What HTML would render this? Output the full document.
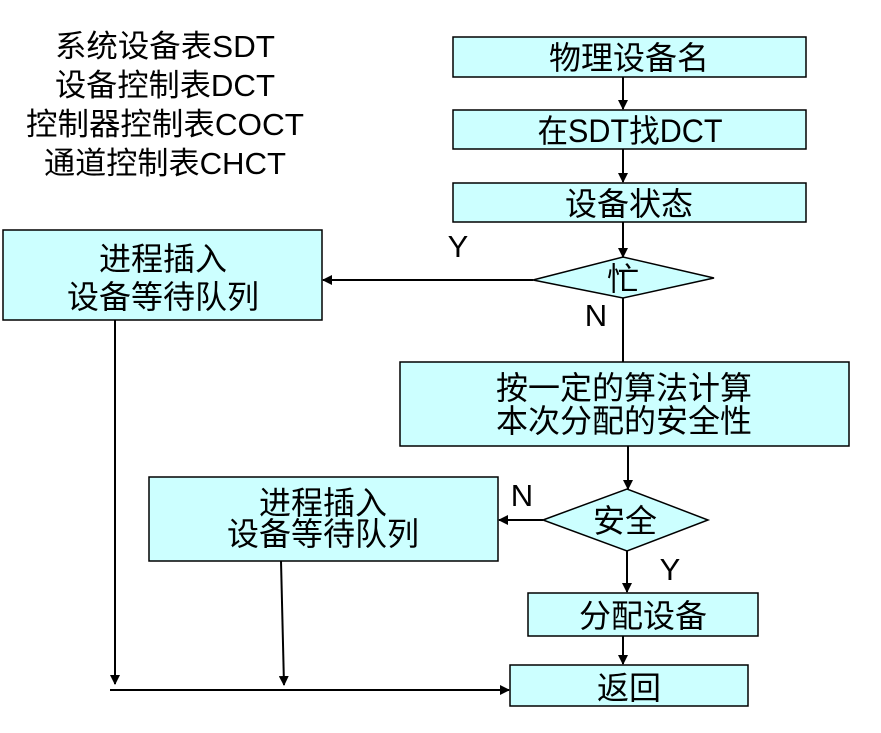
<!DOCTYPE html>
<html><head><meta charset="utf-8"><style>
html,body{margin:0;padding:0;background:#fff;}
svg{display:block;}
text{font-family:"Liberation Sans","Noto Sans CJK SC",sans-serif;fill:#000;}
</style></head><body>
<svg width="881" height="733" viewBox="0 0 881 733" xmlns="http://www.w3.org/2000/svg">
<defs><marker id="a" markerWidth="10" markerHeight="10" refX="9" refY="5" orient="auto" markerUnits="userSpaceOnUse"><path d="M0,0 L10,5 L0,10 z" fill="#000"/></marker></defs>
<g font-size="31" text-anchor="middle">
<text x="165" y="57" textLength="220" lengthAdjust="spacingAndGlyphs">系统设备表SDT</text>
<text x="165" y="96" textLength="220" lengthAdjust="spacingAndGlyphs">设备控制表DCT</text>
<text x="165" y="135" textLength="278" lengthAdjust="spacingAndGlyphs">控制器控制表COCT</text>
<text x="165" y="174" textLength="242" lengthAdjust="spacingAndGlyphs">通道控制表CHCT</text>
</g>
<g fill="#ccffff" stroke="#000" stroke-width="1.5">
<rect x="453" y="37" width="353" height="40"/>
<rect x="453" y="110" width="353" height="39"/>
<rect x="453" y="183" width="353" height="39"/>
<polygon points="533,280 623,257 714,278 623,298"/>
<rect x="3" y="230" width="319" height="90"/>
<rect x="400" y="362" width="449" height="84"/>
<polygon points="543,520 627,489 708,520 627,551"/>
<rect x="149" y="477" width="349" height="84"/>
<rect x="528" y="593" width="230" height="43"/>
<rect x="510" y="665" width="238" height="41"/>
</g>
<g stroke="#000" stroke-width="2" fill="none">
<line x1="623" y1="77" x2="623" y2="109" marker-end="url(#a)"/>
<line x1="623" y1="149" x2="623" y2="182" marker-end="url(#a)"/>
<line x1="623" y1="222" x2="623" y2="257" marker-end="url(#a)"/>
<line x1="533" y1="280" x2="323" y2="280" marker-end="url(#a)"/>
<line x1="623" y1="298" x2="623" y2="362"/>
<line x1="628" y1="446" x2="628" y2="489" marker-end="url(#a)"/>
<line x1="543" y1="520" x2="499" y2="520" marker-end="url(#a)"/>
<line x1="627" y1="551" x2="627" y2="592" marker-end="url(#a)"/>
<line x1="623" y1="636" x2="623" y2="664" marker-end="url(#a)"/>
<line x1="115" y1="320" x2="115" y2="684" marker-end="url(#a)"/>
<line x1="281" y1="561" x2="284" y2="685" marker-end="url(#a)"/>
<line x1="110" y1="690" x2="509" y2="690" marker-end="url(#a)"/>
</g>
<g font-size="32" text-anchor="middle">
<text x="629" y="69">物理设备名</text>
<text x="630" y="142" textLength="185" lengthAdjust="spacingAndGlyphs">在SDT找DCT</text>
<text x="629" y="215">设备状态</text>
<text x="623" y="290">忙</text>
<text x="163" y="270">进程插入</text>
<text x="163" y="308">设备等待队列</text>
<text x="624" y="399">按一定的算法计算</text>
<text x="624" y="432">本次分配的安全性</text>
<text x="625" y="532">安全</text>
<text x="323" y="514">进程插入</text>
<text x="323" y="545">设备等待队列</text>
<text x="643" y="627">分配设备</text>
<text x="629" y="699">返回</text>
</g>
<g font-size="31" text-anchor="middle">
<text x="458" y="257">Y</text>
<text x="596" y="326">N</text>
<text x="522" y="506">N</text>
<text x="670" y="580">Y</text>
</g>
</svg>
</body></html>
